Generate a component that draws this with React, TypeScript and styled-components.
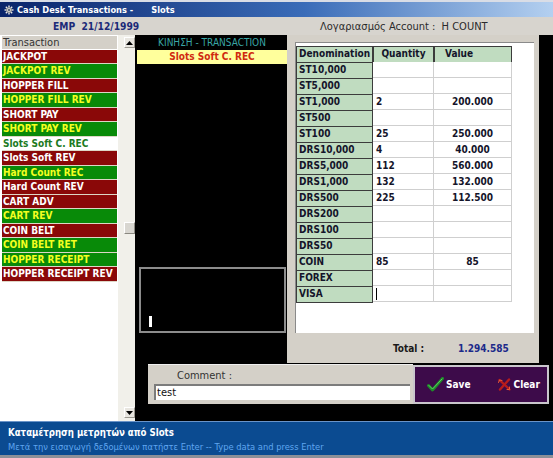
import React from "react";
import styled, { createGlobalStyle } from "styled-components";

const Global = createGlobalStyle`
  html, body { margin: 0; padding: 0; background: #000; }
  body { font-family: "DejaVu Sans Condensed", "DejaVu Sans", sans-serif; }
  * { box-sizing: border-box; }
`;

const Window = styled.div`
  width: 553px;
  height: 458px;
  display: flex;
  flex-direction: column;
  overflow: hidden;
  background: #000;
`;

const TitleBar = styled.div`
  height: 17px;
  border-top: 2px solid #d9dde6;
  background: linear-gradient(to right, #0a246a 0%, #3a6cb8 55%, #b4d0f0 100%);
  display: flex;
  align-items: center;
  padding-left: 4px;
  color: #fff;
  font-weight: bold;
  font-size: 9.2px;
  white-space: pre;
`;

const TitleText = styled.span<{ $gap?: number }>`
  margin-left: ${(p) => p.$gap ?? 0}px;
`;

const InfoBar = styled.div`
  height: 18px;
  background: #d7d4ce;
  display: grid;
  grid-template-columns: 320px 1fr;
  align-items: center;
  font-size: 11px;
`;

const EmpText = styled.span`
  padding-left: 53px;
  color: #1c2a78;
  font-weight: bold;
  font-size: 10.2px;
  white-space: pre;
`;

const AccountText = styled.span`
  color: #2a2a2a;
  white-space: pre;
`;

const Main = styled.div`
  height: 386px;
  display: flex;
`;

const LeftList = styled.div`
  width: 118px;
  background: #fff;
  display: flex;
  flex-direction: column;
  padding: 1px 1px 0 2px;
`;

const ListHeader = styled.div`
  height: 13px;
  background: #d4d0c8;
  color: #333;
  font-size: 11px;
  line-height: 13px;
  padding-left: 1px;
  margin-bottom: 0.5px;
`;

type Variant = "red" | "green" | "selected";

const ListRow = styled.div<{ $v: Variant }>`
  height: 14.5px;
  border-bottom: 1px solid #ddd6c6;
  padding-left: 1px;
  font-size: 10px;
  font-weight: bold;
  line-height: 13.5px;
  white-space: nowrap;
  overflow: hidden;
  background: ${(p) =>
    p.$v === "red" ? "#8a0808" : p.$v === "green" ? "#088a08" : "#ffffff"};
  color: ${(p) =>
    p.$v === "red" ? "#ffffff" : p.$v === "green" ? "#f4ff20" : "#1c7a22"};
`;

const ScrollBar = styled.div`
  width: 17px;
  background: #f1f0ea;
  display: flex;
  flex-direction: column;
  align-items: flex-end;
  padding: 2px 0 3px 0;
`;

const ScrollBtn = styled.div`
  width: 11px;
  height: 11px;
  background: #e8e6e0;
  border: 1px solid #fff;
  border-right-color: #9a9890;
  border-bottom-color: #9a9890;
  display: flex;
  align-items: center;
  justify-content: center;
`;

const Track = styled.div`
  flex: 1;
  width: 11px;
`;

const Thumb = styled.div<{ $top: number }>`
  margin-top: ${(p) => p.$top}px;
  width: 11px;
  height: 12px;
  background: #d8d6d0;
  border: 1px solid #fff;
  border-right-color: #8a8880;
  border-bottom-color: #8a8880;
`;

const Workspace = styled.div`
  flex: 1;
  background: #000;
  display: flex;
  flex-direction: column;
`;

const TopRow = styled.div`
  height: 328px;
  display: flex;
`;

const LeftCol = styled.div`
  width: 152px;
  display: flex;
  flex-direction: column;
  padding-top: 1px;
`;

const CaptionLabel = styled.div`
  height: 14px;
  padding-left: 2px;
  text-align: center;
  color: #3aa6a6;
  font-size: 10px;
  line-height: 14px;
`;

const SelectedBar = styled.div`
  height: 14px;
  margin-left: 2px;
  background: #ffff9c;
  text-align: center;
  color: #d02a10;
  font-size: 10px;
  font-weight: bold;
  line-height: 14px;
`;

const Spacer = styled.div`
  flex: 1;
`;

const MemoBox = styled.div`
  height: 66px;
  margin: 0 1px 30px 4px;
  border: 2px solid #8c8c8c;
  display: flex;
  align-items: flex-end;
  padding: 0 0 4px 8px;
`;

const Caret = styled.div`
  width: 3px;
  height: 11px;
  background: #fff;
`;

const TablePanel = styled.div`
  width: 252px;
  background: #d4d0c8;
  display: flex;
  flex-direction: column;
  padding: 7px 5px 0 8px;
`;

const WhiteArea = styled.div`
  height: 291px;
  background: #fff;
  border-left: 1px solid #8a8a8a;
  border-top: 1px solid #8a8a8a;
  padding-top: 3px;
`;

const Grid = styled.div`
  display: grid;
  grid-template-columns: 77px 61px 78px;
  grid-auto-rows: 16px;
  width: 216px;
`;

const GreenCell = styled.div<{ $align?: string; $pad?: number }>`
  background: #c0dcc0;
  border: 1px solid #3c3c3c;
  margin: 0 0 -1px 0;
  font-size: 10px;
  font-weight: bold;
  color: #14142a;
  line-height: 14px;
  padding-left: ${(p) => p.$pad ?? 2}px;
  text-align: ${(p) => p.$align ?? "left"};
  white-space: nowrap;
  overflow: hidden;
`;

const DataCell = styled.div<{ $align?: string }>`
  background: #fff;
  border-right: 1px solid #cfcfcf;
  border-bottom: 1px solid #cfcfcf;
  font-size: 10px;
  font-weight: bold;
  color: #14142a;
  line-height: 15px;
  padding-left: ${(p) => (p.$align === "center" ? 0 : 3)}px;
  text-align: ${(p) => p.$align ?? "left"};
  white-space: nowrap;
`;

const InputCaret = styled.span`
  display: inline-block;
  width: 1px;
  height: 12px;
  background: #000;
  vertical-align: middle;
`;

const TotalRow = styled.div`
  flex: 1;
  display: flex;
  align-items: center;
  font-size: 10px;
  font-weight: bold;
  padding-left: 98px;
`;

const TotalLabel = styled.span`
  color: #1a1a1a;
  width: 65px;
`;

const TotalValue = styled.span`
  color: #1c2a8a;
`;

const BottomRow = styled.div`
  display: flex;
  padding-left: 13px;
  margin-top: 1px;
`;

const CommentPanel = styled.div`
  width: 265px;
  height: 40px;
  background: #d4d0c8;
  border-top: 1px solid #efefef;
  padding: 3px 3px 0 6px;
  display: flex;
  flex-direction: column;
`;

const CommentLabel = styled.div`
  height: 16px;
  padding-left: 23px;
  font-size: 11px;
  color: #333;
  line-height: 16px;
`;

const CommentInput = styled.div`
  height: 16px;
  background: #fff;
  border-top: 2px solid #7c7c7c;
  border-left: 2px solid #7c7c7c;
  font-size: 11px;
  color: #111;
  line-height: 13px;
  padding-left: 1px;
`;

const ButtonPanel = styled.div`
  width: 136px;
  height: 39px;
  margin-top: 1px;
  background: #3d0b4a;
  border: 2px solid #c9c6cc;
  display: flex;
  align-items: center;
  padding-left: 12px;
  gap: 26px;
`;

const ActionButton = styled.div`
  display: flex;
  align-items: center;
  gap: 2px;
  color: #fff;
  font-size: 10px;
  font-weight: bold;
`;

const StatusBar = styled.div`
  flex: 1;
  background: #0b4b91;
  border-top: 1px solid #6a94c8;
  border-bottom: 3px solid #8c9098;
  padding: 4px 8px 0 8px;
  display: flex;
  flex-direction: column;
`;

const StatusTitle = styled.div`
  color: #fff;
  font-size: 9.6px;
  font-weight: bold;
  line-height: 14px;
  white-space: nowrap;
`;

const StatusHint = styled.div`
  color: #5fa6f0;
  font-size: 9.3px;
  line-height: 14px;
  white-space: nowrap;
`;

const transactions: { label: string; v: Variant }[] = [
  { label: "JACKPOT", v: "red" },
  { label: "JACKPOT REV", v: "green" },
  { label: "HOPPER FILL", v: "red" },
  { label: "HOPPER FILL REV", v: "green" },
  { label: "SHORT PAY", v: "red" },
  { label: "SHORT PAY REV", v: "green" },
  { label: "Slots Soft C. REC", v: "selected" },
  { label: "Slots Soft REV", v: "red" },
  { label: "Hard Count REC", v: "green" },
  { label: "Hard Count REV", v: "red" },
  { label: "CART ADV", v: "red" },
  { label: "CART REV", v: "green" },
  { label: "COIN BELT", v: "red" },
  { label: "COIN BELT RET", v: "green" },
  { label: "HOPPER RECEIPT", v: "green" },
  { label: "HOPPER RECEIPT REV", v: "red" },
];

const rows: [string, string, string][] = [
  ["ST10,000", "", ""],
  ["ST5,000", "", ""],
  ["ST1,000", "2", "200.000"],
  ["ST500", "", ""],
  ["ST100", "25", "250.000"],
  ["DRS10,000", "4", "40.000"],
  ["DRS5,000", "112", "560.000"],
  ["DRS1,000", "132", "132.000"],
  ["DRS500", "225", "112.500"],
  ["DRS200", "", ""],
  ["DRS100", "", ""],
  ["DRS50", "", ""],
  ["COIN", "85", "85"],
  ["FOREX", "", ""],
  ["VISA", "", ""],
];

const AppIcon = () => (
  <svg width="10" height="10" viewBox="0 0 10 10">
    <g stroke="#e8e8e8" strokeWidth="1.4">
      <line x1="5" y1="0.5" x2="5" y2="9.5" />
      <line x1="0.5" y1="5" x2="9.5" y2="5" />
      <line x1="1.8" y1="1.8" x2="8.2" y2="8.2" />
      <line x1="8.2" y1="1.8" x2="1.8" y2="8.2" />
    </g>
    <circle cx="5" cy="5" r="2.6" fill="#c8c8c8" stroke="#707070" strokeWidth="0.6" />
    <circle cx="5" cy="5" r="1" fill="#40506a" />
  </svg>
);

const UpArrow = () => (
  <svg width="7" height="4" viewBox="0 0 7 4">
    <path d="M0 4 L3.5 0 L7 4 Z" fill="#000" />
  </svg>
);

const DownArrow = () => (
  <svg width="7" height="4" viewBox="0 0 7 4">
    <path d="M0 0 L3.5 4 L7 0 Z" fill="#000" />
  </svg>
);

const CheckIcon = () => (
  <svg width="17" height="15" viewBox="0 0 17 15">
    <path d="M1.5 8.5 L5.5 13 L15.5 1.5" fill="none" stroke="#1f8a2a" strokeWidth="3" strokeLinecap="round" strokeLinejoin="round" />
    <path d="M2 8.5 L5.5 12 L15 2" fill="none" stroke="#5cd060" strokeWidth="1" strokeLinecap="round" strokeLinejoin="round" />
  </svg>
);

const ClearIcon = () => (
  <svg width="15" height="15" viewBox="0 0 15 15">
    <g fill="none" stroke="#b81c1c" strokeWidth="2.4" strokeLinecap="round">
      <path d="M2.5 3 L12.5 12.5" />
      <path d="M12 2.5 L3 12.5" />
    </g>
    <g fill="none" stroke="#e85a3a" strokeWidth="1" strokeLinecap="round">
      <path d="M1.5 5.5 L2.5 3 L5 3.5" />
      <path d="M10 12.5 L12.5 12.5 L12.5 10" />
    </g>
  </svg>
);

export default function App() {
  return (
    <>
      <Global />
      <Window>
        <TitleBar>
          <AppIcon />
          <TitleText $gap={3}>Cash Desk Transactions -</TitleText>
          <TitleText $gap={18}>Slots</TitleText>
        </TitleBar>
        <InfoBar>
          <EmpText>EMP  21/12/1999</EmpText>
          <AccountText>Λογαριασμός Account :  H COUNT</AccountText>
        </InfoBar>
        <Main>
          <LeftList>
            <ListHeader>Transaction</ListHeader>
            {transactions.map((t) => (
              <ListRow key={t.label} $v={t.v}>
                {t.label}
              </ListRow>
            ))}
          </LeftList>
          <ScrollBar>
            <ScrollBtn>
              <UpArrow />
            </ScrollBtn>
            <Track>
              <Thumb $top={174} />
            </Track>
            <ScrollBtn>
              <DownArrow />
            </ScrollBtn>
          </ScrollBar>
          <Workspace>
            <TopRow>
              <LeftCol>
                <CaptionLabel>ΚΙΝΗΣΗ - TRANSACTION</CaptionLabel>
                <SelectedBar>Slots Soft C. REC</SelectedBar>
                <Spacer />
                <MemoBox>
                  <Caret />
                </MemoBox>
              </LeftCol>
              <TablePanel>
                <WhiteArea>
                  <Grid>
                    <GreenCell>Denomination</GreenCell>
                    <GreenCell $align="center" $pad={0}>Quantity</GreenCell>
                    <GreenCell $pad={10}>Value</GreenCell>
                    {rows.map(([d, q, v], i) => (
                      <React.Fragment key={d}>
                        <GreenCell>{d}</GreenCell>
                        <DataCell>{i === rows.length - 1 ? <InputCaret /> : q}</DataCell>
                        <DataCell $align="center">{v}</DataCell>
                      </React.Fragment>
                    ))}
                  </Grid>
                </WhiteArea>
                <TotalRow>
                  <TotalLabel>Total :</TotalLabel>
                  <TotalValue>1.294.585</TotalValue>
                </TotalRow>
              </TablePanel>
            </TopRow>
            <BottomRow>
              <CommentPanel>
                <CommentLabel>Comment :</CommentLabel>
                <CommentInput>test</CommentInput>
              </CommentPanel>
              <ButtonPanel>
                <ActionButton>
                  <CheckIcon />
                  Save
                </ActionButton>
                <ActionButton>
                  <ClearIcon />
                  Clear
                </ActionButton>
              </ButtonPanel>
            </BottomRow>
          </Workspace>
        </Main>
        <StatusBar>
          <StatusTitle>Καταμέτρηση μετρητών από Slots</StatusTitle>
          <StatusHint>Μετά την εισαγωγή δεδομένων πατήστε Enter -- Type data and press Enter</StatusHint>
        </StatusBar>
      </Window>
    </>
  );
}
